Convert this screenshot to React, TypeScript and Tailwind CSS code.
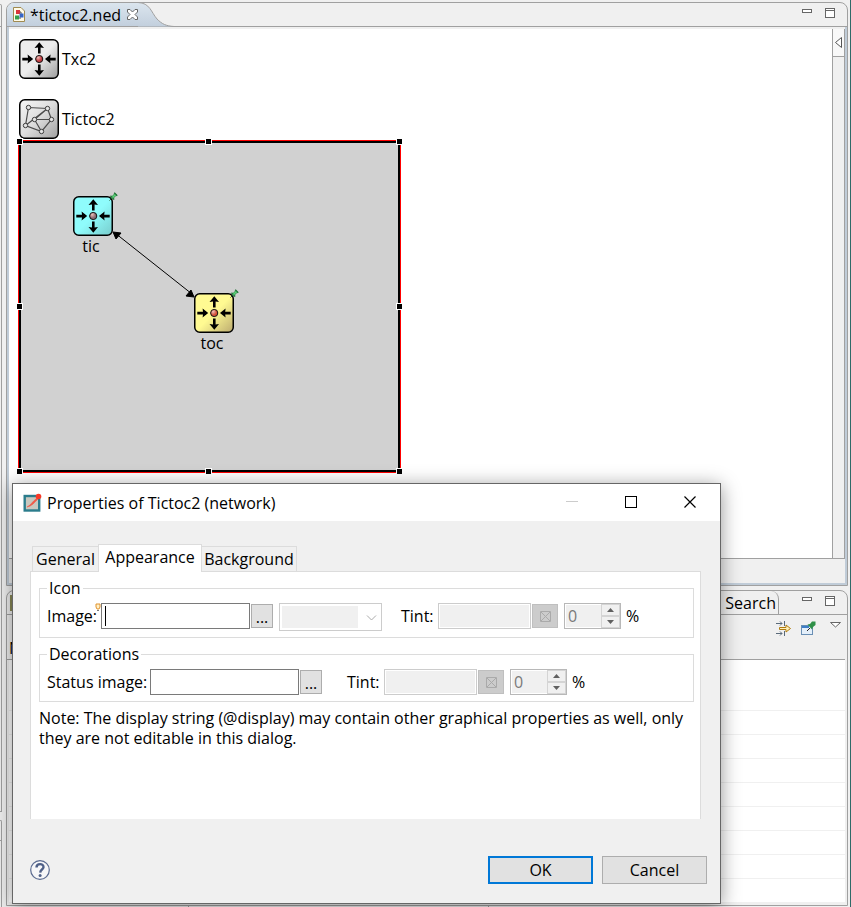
import type { ReactNode } from 'react';

const chromeLine = 'border-[#a0a0a0]';

function NodeIcon({ id, from, to, ball }: { id: string; from: string; to: string; ball: string }) {
  return (
    <svg width="40" height="40" viewBox="0 0 40 40" className="block shrink-0">
      <defs>
        <linearGradient id={id} x1="0" y1="0" x2="1" y2="1">
          <stop offset="0.5" stopColor={from} />
          <stop offset="1" stopColor={to} />
        </linearGradient>
        <radialGradient id={id + '-ball'} cx="0.35" cy="0.3" r="0.8">
          <stop offset="0" stopColor="#f0c0b8" />
          <stop offset="0.6" stopColor={ball} />
          <stop offset="1" stopColor={ball} />
        </radialGradient>
      </defs>
      <rect x="0.75" y="0.75" width="38.5" height="38.5" rx="5" fill={`url(#${id})`} stroke="#000" strokeWidth="1.5" />
      <path
        d="M19 14.5V8.5L15.5 9L20.3 3.3L25 9L21.6 8.5V14.5ZM19 25.5V31.5L15.5 31L20.3 36.8L25 31L21.6 31.5V25.5ZM3.3 18.8H9L8.6 15.6L14.2 20.1L8.6 24.6L9 21.4H3.3ZM36.7 18.8H31.2L31.6 15.6L26 20.1L31.6 24.6L31.2 21.4H36.7Z"
        fill="#000"
      />
      <circle cx="20.2" cy="20" r="3.6" fill={`url(#${id}-ball)`} stroke="#111" />
    </svg>
  );
}

function NetworkIcon() {
  const dots = [[9.5, 8.5], [28.5, 9.5], [15.5, 20.5], [32.5, 20.5], [6.5, 26.5], [22.5, 32.5]];
  return (
    <svg width="40" height="40" viewBox="0 0 40 40" className="block shrink-0">
      <defs>
        <linearGradient id="net" x1="0" y1="0" x2="1" y2="1">
          <stop offset="0" stopColor="#f6f6f6" />
          <stop offset="0.5" stopColor="#dcdcdc" />
          <stop offset="1" stopColor="#a0a0a0" />
        </linearGradient>
      </defs>
      <rect x="0.75" y="0.75" width="38.5" height="38.5" rx="5" fill="url(#net)" stroke="#000" strokeWidth="1.5" />
      <path
        d="M9.5 8.5L28.5 9.5M28.5 9.5L32.5 20.5L22.5 32.5L6.5 26.5L9.5 8.5M28.5 9.5L15.5 20.5H32.5M28.5 9.5L6.5 26.5M15.5 20.5L22.5 32.5"
        fill="none"
        stroke="#4c4c4c"
        strokeWidth="1.2"
      />
      {dots.map(([x, y]) => (
        <circle key={x} cx={x} cy={y} r="2.2" fill="#e4e4e4" stroke="#3c3c3c" />
      ))}
    </svg>
  );
}

function Pin() {
  return (
    <svg width="9" height="9" viewBox="0 0 9 9" className="absolute -top-1 left-9">
      <path d="M0.5 8.5L3 6" stroke="#1d5a30" />
      <path d="M1.5 3.8L5.2 7.5M5.2 0.8L8.2 3.8" stroke="#1a6e30" strokeWidth="1.4" />
      <path d="M2.5 5L5.7 1.8L7.2 3.3L4 6.5Z" fill="#5fd07a" stroke="#1f8a3c" strokeWidth="0.8" />
    </svg>
  );
}

function MinMax() {
  return (
    <svg width="33" height="12" viewBox="0 0 33 12" className="block">
      <rect x="0.5" y="1.5" width="9" height="3" fill="#fff" stroke="#666" />
      <rect x="23.5" y="0.5" width="9" height="9" fill="#fff" stroke="#666" />
      <path d="M23.5 2.5H32.5" stroke="#666" />
    </svg>
  );
}

function Handle({ place }: { place: string }) {
  return <span className={`absolute size-[5px] bg-black outline outline-white ${place}`} />;
}

function Group({ title, children }: { title: string; children: ReactNode }) {
  return (
    <fieldset className="min-w-0 border border-[#dcdcdc] px-[7px] pb-1.5">
      <legend className="h-5 px-0.5 leading-5">{title}</legend>
      <div className="flex items-start pt-[5px]">{children}</div>
    </fieldset>
  );
}

function Browse({ label }: { label: string }) {
  return (
    <button aria-label={label} className="mt-px ml-px h-6 w-[22px] border border-[#adadad] bg-[#e1e1e1] leading-6">
      ...
    </button>
  );
}

function Tint({ id, gap }: { id: string; gap: string }) {
  return (
    <>
      <label htmlFor={id} className={`w-[37px] leading-[26px] ${gap}`}>
        Tint:
      </label>
      <input id={id} disabled className="h-[26px] w-[93px] border border-[#ccc] bg-[#f0f0f0] shadow-[inset_0_0_0_1px_#fff]" />
      <button disabled aria-label="Pick colour" className="mt-px ml-px flex h-6 w-[26px] items-center justify-center border border-[#bfbfbf] bg-[#ccc]">
        <svg width="11" height="11" viewBox="0 0 11 11" fill="none" stroke="#aaa">
          <path d="M0.5 0.5H10.5V10.5H0.5ZM1 1L10 10M10 1L1 10" />
        </svg>
      </button>
      <div className="ml-1.5 flex h-[26px] w-[57px] border border-[#b8b8b8] bg-[#f0f0f0] shadow-[inset_0_0_0_1px_#fff]">
        <input id={id + '-amount'} aria-label="Tint percentage" disabled value="0" readOnly className="w-9 min-w-0 bg-transparent pl-[3px] leading-6 text-[#7a7a7a]" />
        <div className="flex flex-1 flex-col">
          <button disabled aria-label="Increase" className="flex flex-1 items-center justify-center border border-[#d4d4d4]">
            <svg width="7" height="4" viewBox="0 0 7 4"><path d="M0 4L3.5 0L7 4Z" fill="#606060" /></svg>
          </button>
          <button disabled aria-label="Decrease" className="flex flex-1 items-center justify-center border border-[#d4d4d4]">
            <svg width="7" height="4" viewBox="0 0 7 4"><path d="M0 0L3.5 4L7 0Z" fill="#606060" /></svg>
          </button>
        </div>
      </div>
      <label htmlFor={id + '-amount'} className="ml-[5px] leading-[26px]">
        %
      </label>
    </>
  );
}

function Editor() {
  return (
    <section className={`flex flex-1 flex-col overflow-hidden rounded-t-lg border ${chromeLine}`}>
      <header className={`flex h-6 shrink-0 border-b ${chromeLine}`}>
        <div className="flex items-center bg-linear-to-b from-[#dbe5ee] to-[#c2cfdd] pl-1.5">
          <svg width="12" height="15" viewBox="0 0 12 15" className="mr-[5px]">
            <path d="M0.5 0.5H8L11.5 4V14.5H0.5Z" fill="#fffbe8" stroke="#a08a50" />
            <path d="M4 5H8V10M4 11H8" stroke="#555" fill="none" />
            <rect x="3" y="3" width="4" height="4" fill="#d8343c" />
            <rect x="6.5" y="6.5" width="4" height="4" fill="#3566c8" />
            <rect x="2" y="8.5" width="4" height="4" fill="#35a04c" />
          </svg>
          <span>*tictoc2.ned</span>
          <button aria-label="Close tab" className="ml-1.5">
            <svg width="11" height="11" viewBox="0 0 11 11" className="block">
              <path d="M0.5 0.5H3L5.5 3L8 0.5H10.5V3L8 5.5L10.5 8V10.5H8L5.5 8L3 10.5H0.5V8L3 5.5L0.5 3Z" fill="#fff" stroke="#666" />
            </svg>
          </button>
        </div>
        <svg width="36" height="24" viewBox="0 0 36 24" className="block shrink-0">
          <defs>
            <linearGradient id="tab" x1="0" y1="0" x2="0" y2="1">
              <stop offset="0" stopColor="#dbe5ee" />
              <stop offset="1" stopColor="#c2cfdd" />
            </linearGradient>
          </defs>
          <path d="M0 0C12 0 13 9 19 16C24 21 28 23 36 23.5H0Z" fill="url(#tab)" />
          <path d="M0 -0.5C12 0 13 9 19 16C24 21 28 23 36 23.5" fill="none" stroke="#a0a0a0" />
        </svg>
        <div className="ml-auto pt-[5px] pr-3">
          <MinMax />
        </div>
      </header>
      <div className="flex flex-1 border-x-2 border-b-2 border-[#c0ccd8] pt-0.5">
        <div className="flex min-w-0 flex-1 flex-col">
          <div className={`flex flex-1 border-b ${chromeLine}`}>
            <main className="min-w-0 flex-1 bg-white pt-2.5 pl-2.5">
              <div className="flex items-center gap-[3px]">
                <NodeIcon id="txc" from="#ececec" to="#9c9c9c" ball="#c23a40" />
                <span>Txc2</span>
              </div>
              <div className="mt-5 flex items-center gap-[3px]">
                <NetworkIcon />
                <span>Tictoc2</span>
              </div>
              <div className="relative mt-px -ml-px h-[333px] w-[383px] border border-[#f00]">
                <div className="h-full border-2 border-black bg-[#d1d1d1]" />
                <svg width="381" height="331" viewBox="0 0 381 331" className="absolute top-0 left-0">
                  <path d="M96 92L173 153" stroke="#000" />
                  <path d="M94 91L102 92L97 98ZM175 156L167 155L172 149Z" stroke="#000" strokeLinejoin="round" />
                </svg>
                <div className="absolute top-[55px] left-[54px]">
                  <NodeIcon id="tic" from="#8ffcfc" to="#78cccc" ball="#8a6a74" />
                  <Pin />
                  <div className="w-9 text-center leading-5">tic</div>
                </div>
                <div className="absolute top-[152px] left-[175px]">
                  <NodeIcon id="toc" from="#fffa92" to="#bcab70" ball="#d4503a" />
                  <Pin />
                  <div className="w-9 text-center leading-5">toc</div>
                </div>
                <Handle place="-top-0.5 -left-0.5" />
                <Handle place="-top-0.5 left-[187px]" />
                <Handle place="-top-0.5 -right-0.5" />
                <Handle place="top-[163px] -left-0.5" />
                <Handle place="top-[163px] -right-0.5" />
                <Handle place="-bottom-0.5 -left-0.5" />
                <Handle place="-bottom-0.5 left-[187px]" />
                <Handle place="-right-0.5 -bottom-0.5" />
              </div>
            </main>
            <aside className={`w-[13px] border-x ${chromeLine}`}>
              <button aria-label="Show palette" className={`flex h-7 w-full items-center justify-center border-b bg-[#f8f8f8] ${chromeLine}`}>
                <svg width="7" height="11" viewBox="0 0 7 11"><path d="M6.5 0.5V10.5L0.5 5.5Z" fill="#fff" stroke="#555" /></svg>
              </button>
            </aside>
          </div>
          <div className="h-6" />
        </div>
      </div>
    </section>
  );
}

function SearchView() {
  return (
    <section className={`mt-1 overflow-hidden rounded-t-lg border ${chromeLine}`}>
      <header className={`flex h-6 border-b ${chromeLine}`}>
        <div className="w-[9px] pt-1 pl-[3px]">
          <div className="h-4 w-3 border-2 border-[#8a8a58] bg-[#d8e4f0]" />
        </div>
        <div className={`flex w-[763px] min-w-0 items-center justify-end gap-1 rounded-tr-lg border-r pr-0.5 ${chromeLine}`}>
          <svg width="14" height="14" viewBox="0 0 14 14"><circle cx="10" cy="5" r="4" fill="#e8b45c" /><path d="M6 8L1 13" stroke="#777" strokeWidth="2" /></svg>
          <span>Search</span>
        </div>
        <div className="ml-auto pt-[5px] pr-3">
          <MinMax />
        </div>
      </header>
      <div className={`mr-[2px] flex h-[45px] items-start justify-end border-b pt-[5px] pr-1 ${chromeLine}`}>
        <span className="mt-4 mr-auto pl-0.5">N</span>
        <button aria-label="Expand all matches" className="mr-[9px]">
          <svg width="17" height="18" viewBox="0 0 17 18" className="block" fill="none">
            <path d="M1 3.5H7M1 13.5H7M5 1.5L7 3.5L5 5.5M5 11.5L7 13.5L5 15.5M9.5 1V6M9.5 11V16" stroke="#5a6a7a" />
            <path d="M4.5 7.5H11V5L15.5 8.5L11 12V9.5H4.5Z" fill="#fff0b8" stroke="#b07c10" />
          </svg>
        </button>
        <button aria-label="Pin the view" className="mr-[14px]">
          <svg width="15" height="16" viewBox="0 0 15 16" className="block">
            <rect x="0.5" y="5.5" width="11" height="9" fill="#e4effa" stroke="#6a8fb4" />
            <path d="M1 6H8V8H1Z" fill="#3f7fc8" />
            <path d="M6 11L9 8" stroke="#222" />
            <path d="M6.5 4.5L9 4L11 1.5L14.5 1.5L14.5 5L12 7L11 9.5Z" fill="#2f9048" />
          </svg>
        </button>
        <button aria-label="View menu">
          <svg width="11" height="8" viewBox="0 0 11 8" className="block"><path d="M0.5 2.5H10.5L5.5 7Z" fill="#fff" stroke="#666" /></svg>
        </button>
      </div>
      <div className="mx-[2px] mb-0.5 bg-white pt-[27px]">
        {Array.from({ length: 9 }, (_, i) => (
          <div key={i} className="h-6 border-b border-[#f0f0f0]" />
        ))}
      </div>
    </section>
  );
}

function PropertiesDialog() {
  const page = 'border-[#dcdcdc]';
  return (
    <div
      role="dialog"
      aria-labelledby="dialog-title"
      className="absolute top-[483px] left-3 w-[709px] border border-[#666] bg-[#f0f0f0] shadow-[0_3px_18px_rgba(0,0,0,0.42)]"
    >
      <header className="flex h-[37px] items-center bg-white pr-[23px] pl-2.5">
        <svg width="19" height="20" viewBox="0 0 19 20" className="mr-[5px]">
          <rect x="1.7" y="3" width="14.5" height="14.5" fill="#c9c8bf" stroke="#2b7c8c" strokeWidth="2.4" />
          <path d="M4 14C8 12 9 9 14 5L15 6C11 10 9 13 4 14Z" fill="#f05a48" stroke="#f05a48" strokeWidth="0.6" />
          <circle cx="15.5" cy="3.5" r="2.8" fill="#f83a28" />
        </svg>
        <h1 id="dialog-title" className="leading-5">Properties of Tictoc2 (network)</h1>
        <div className="ml-auto flex items-center gap-[46px]">
          <button aria-label="Minimize" disabled>
            <svg width="13" height="13" viewBox="0 0 13 13" className="block"><path d="M0 5.5H12" stroke="#ccc" /></svg>
          </button>
          <button aria-label="Maximize">
            <svg width="13" height="13" viewBox="0 0 13 13" className="block"><rect x="0.5" y="0.5" width="11" height="11" fill="none" stroke="#000" /></svg>
          </button>
          <button aria-label="Close">
            <svg width="13" height="13" viewBox="0 0 13 13" className="block"><path d="M0.5 0.5L11.5 11.5M11.5 0.5L0.5 11.5" stroke="#000" strokeWidth="1.2" /></svg>
          </button>
        </div>
      </header>
      <div className="pt-[23px] pr-[19px] pl-[17px]">
        <div role="tablist" className="relative -mb-px flex items-end pl-0.5">
          <button role="tab" aria-selected="false" className={`h-[26px] w-[67px] border ${page}`}>General</button>
          <button role="tab" aria-selected="true" className={`-ml-px h-7 w-[104px] border border-b-0 bg-white pb-1 leading-6 ${page}`}>Appearance</button>
          <button role="tab" aria-selected="false" className={`-ml-px h-[26px] w-24 border ${page}`}>Background</button>
        </div>
        <div role="tabpanel" className={`flex min-h-[248px] flex-col gap-1.5 border border-b-0 bg-white pt-1.5 pr-1.5 pl-2 ${page}`}>
          <Group title="Icon">
            <label htmlFor="image" className="relative w-[54px] leading-[26px]">
              Image:
              <svg width="6" height="9" viewBox="0 0 6 9" className="absolute top-0 right-0">
                <path d="M1 1H5V4L4 6H2L1 4Z" fill="#fff0c8" stroke="#e0922c" />
                <path d="M2 7.5H4" stroke="#777" />
              </svg>
            </label>
            <span className="relative">
              <input id="image" className="block h-[26px] w-[149px] border border-[#7a7a7a] bg-white px-1" />
              <span className="absolute top-[3px] left-1 h-5 w-px bg-black" />
            </span>
            <Browse label="Browse image" />
            <div className="relative ml-1.5 h-7 w-[103px] border border-[#ccc] p-0.5">
              <select disabled aria-label="Image size" className="block h-[22px] w-[76px] appearance-none bg-[#f0f0f0] opacity-100" />
              <svg width="11" height="6" viewBox="0 0 11 6" className="absolute top-[11px] right-1" fill="none"><path d="M1 0.5L5.5 5L10 0.5" stroke="#aaa" /></svg>
            </div>
            <Tint id="tint" gap="ml-[19px]" />
          </Group>
          <Group title="Decorations">
            <label htmlFor="status" className="w-[103px] leading-[26px]">Status image:</label>
            <input id="status" className="h-[26px] w-[149px] border border-[#7a7a7a] bg-white px-1" />
            <Browse label="Browse status image" />
            <Tint id="status-tint" gap="ml-[25px]" />
          </Group>
          <p className="leading-5">
            Note: The display string (@display) may contain other graphical properties as well, only they are not editable in this dialog.
          </p>
        </div>
      </div>
      <footer className="flex items-center gap-[9px] pt-[37px] pr-[13px] pb-[19px] pl-[17px]">
        <button aria-label="Help" className="mr-auto">
          <svg width="20" height="20" viewBox="0 0 20 20" className="block" fill="none">
            <circle cx="10" cy="10" r="9.3" fill="#f6f6f8" stroke="#5a6a90" strokeWidth="1.2" />
            <path d="M6.5 7.5C6.5 3 13.8 3.2 13.5 7.2C13.3 9.6 10.3 9.5 10.2 12.6" stroke="#4f6088" strokeWidth="2.4" />
            <circle cx="10.1" cy="15.5" r="1.5" fill="#4f6088" />
          </svg>
        </button>
        <button className="h-7 w-[105px] border-2 border-[#0078d7] bg-[#e1e1e1] leading-6">OK</button>
        <button className="h-7 w-[105px] border border-[#adadad] bg-[#e1e1e1] leading-6">Cancel</button>
      </footer>
    </div>
  );
}

export default function App() {
  return (
    <div className="relative flex min-h-screen overflow-hidden bg-[#f0f0f0] font-['Open_Sans','Noto_Sans',sans-serif] text-base text-black">
      <div className="flex w-1.5 shrink-0 flex-col pt-1">
        <div className={`w-0.5 flex-1 rounded-tr border-t border-r border-b ${chromeLine}`}>
          <div className={`h-[22px] border-b ${chromeLine}`} />
        </div>
        <div className={`mt-2 h-[87px] w-0.5 rounded-tr border-t border-r ${chromeLine}`}>
          <div className={`h-5 border-b ${chromeLine}`} />
        </div>
      </div>
      <div className="flex min-w-0 flex-1 flex-col pt-0.5">
        <Editor />
        <SearchView />
        <div className="flex h-px">
          <div className={`w-[183px] border-r ${chromeLine}`} />
          <div className={`w-[300px] border-r ${chromeLine}`} />
        </div>
      </div>
      <div className="w-[3px] shrink-0 border-r border-[#2e6a68]" />
      <PropertiesDialog />
    </div>
  );
}
